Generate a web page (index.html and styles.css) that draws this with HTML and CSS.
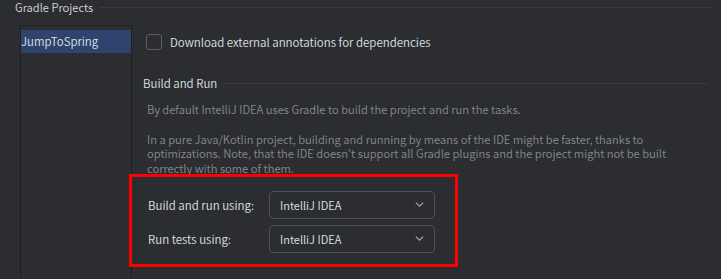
FILE: index.html
```html
<!DOCTYPE html>
<html lang="en">
<head>
<meta charset="utf-8">
<title>Gradle Settings</title>
<link rel="stylesheet" href="styles.css">
</head>
<body>
<div class="page">
  <div class="group-title">
    <span class="group-title-text">Gradle Projects</span>
    <span class="sep-line"></span>
  </div>
  <div class="main">
    <div class="project-list">
      <div class="project-item selected">JumpToSpring</div>
    </div>
    <div class="settings">
      <label class="check-row">
        <span class="checkbox"></span>
        <span class="check-label">Download external annotations for dependencies</span>
      </label>
      <div class="section-title">
        <span class="section-title-text">Build and Run</span>
        <span class="sep-line"></span>
      </div>
      <div class="help">
        <p class="help-p first">By default IntelliJ IDEA uses Gradle to build the project and run the tasks.</p>
        <p class="help-p">In a pure Java/Kotlin project, building and running by means of the IDE might be faster, thanks to optimizations. Note, that the IDE doesn't support all Gradle plugins and the project might not be built correctly with some of them.</p>
      </div>
      <div class="form">
        <div class="form-row">
          <span class="form-label">Build and run using:</span>
          <div class="combo">
            <span class="combo-text">IntelliJ IDEA</span>
            <svg class="chevron" width="9" height="5" viewBox="0 0 9 5"><path d="M0.8 0.6 L4.5 4.2 L8.2 0.6" fill="none" stroke="#a3a6ad" stroke-width="1.2"/></svg>
          </div>
        </div>
        <div class="form-row">
          <span class="form-label">Run tests using:</span>
          <div class="combo">
            <span class="combo-text">IntelliJ IDEA</span>
            <svg class="chevron" width="9" height="5" viewBox="0 0 9 5"><path d="M0.8 0.6 L4.5 4.2 L8.2 0.6" fill="none" stroke="#a3a6ad" stroke-width="1.2"/></svg>
          </div>
        </div>
      </div>
    </div>
  </div>
  <div class="highlight"></div>
</div>
</body>
</html>
```
FILE: styles.css
```css
html, body {
  margin: 0;
  padding: 0;
  background: #2b2d30;
}
body {
  font-family: "Noto Sans CJK KR", "Noto Sans", sans-serif;
  font-weight: 350;
  color: #dfe1e5;
  overflow: hidden;
}
.page {
  position: relative;
  width: 721px;
  height: 279px;
  overflow: hidden;
}
.group-title {
  display: flex;
  align-items: center;
  height: 14px;
  padding-left: 15px;
  padding-right: 8px;
}
.group-title-text {
  font-size: 11.2px;
  line-height: 14px;
  color: #d5d7db;
}
.sep-line {
  flex: 1;
  height: 1px;
  background: #393b40;
  margin-left: 6px;
}
.main {
  display: flex;
  margin-top: 11px;
  padding-left: 20px;
}
.project-list {
  width: 110px;
  height: 300px;
  border: 1px solid #1e1f22;
  border-bottom: none;
  padding-top: 4px;
  flex-shrink: 0;
}
.project-item {
  height: 23px;
  line-height: 23px;
  font-size: 11.45px;
  padding-left: 0;
  white-space: nowrap;
}
.project-item.selected {
  background: #2e436e;
}
.settings {
  flex: 1;
  display: flex;
  flex-direction: column;
  padding-top: 9px;
}
.check-row {
  display: flex;
  align-items: center;
  height: 16px;
  margin-left: 14px;
  gap: 8px;
}
.checkbox {
  width: 14px;
  height: 14px;
  border: 1px solid #5a5d63;
  border-radius: 3px;
  flex-shrink: 0;
}
.check-label {
  font-size: 11.5px;
  line-height: 16px;
}
.section-title {
  display: flex;
  align-items: center;
  height: 14px;
  margin-top: 26px;
  margin-left: 11px;
  padding-right: 12px;
}
.section-title-text {
  font-size: 11.47px;
  line-height: 14px;
}
.help {
  margin-top: 12px;
  margin-left: 15px;
  width: 550px;
  color: #868a91;
  font-size: 11.2px;
}
.help-p {
  margin: 0;
  line-height: 14.2px;
}
.help-p.first {
  margin-bottom: 16px;
}
.form {
  display: flex;
  flex-direction: column;
  gap: 6px;
  margin-top: 16px;
  margin-left: 16px;
}
.form-row {
  display: flex;
  align-items: center;
}
.form-label {
  width: 121px;
  font-size: 11.5px;
  line-height: 16px;
}
.combo {
  box-sizing: content-box;
  width: 144px;
  height: 26px;
  border: 1px solid #4e5157;
  border-radius: 4px;
  background: #2b2d30;
  display: flex;
  align-items: center;
  justify-content: space-between;
  padding-left: 10px;
  padding-right: 10px;
}
.combo-text {
  font-size: 11.1px;
  line-height: 16px;
}
.chevron {
  display: block;
}
.highlight {
  position: absolute;
  left: 129px;
  top: 174px;
  width: 323px;
  height: 87px;
  border: 3px solid #ff0000;
}
```
